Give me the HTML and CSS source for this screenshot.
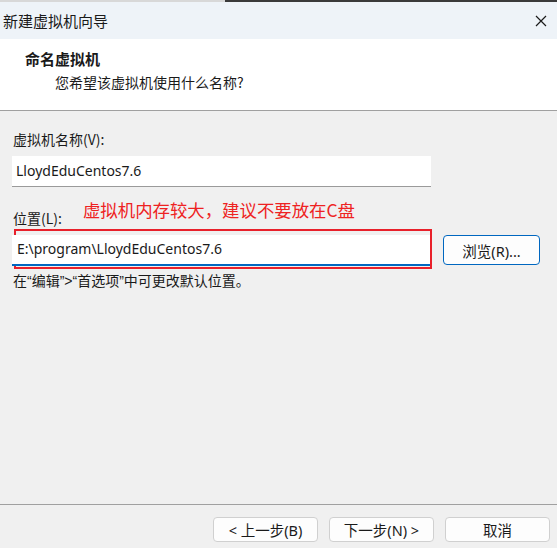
FILE: index.html
```html
<!DOCTYPE html>
<html lang="zh-CN">

<head>
    <meta charset="UTF-8">
    <title>新建虚拟机向导</title>
    <link rel="stylesheet" href="styles.css">
</head>

<body>
    <div class="window">
        <div class="topline">
            <div class="topline-left"></div>
            <div class="topline-right"></div>
        </div>
        <div class="titlebar">
            <span class="title">新建虚拟机向导</span>
            <span class="close">
                <svg width="12" height="12" viewBox="0 0 12 12">
                    <path d="M1 1 L11 11 M11 1 L1 11" stroke="#1a1a1a" stroke-width="1.2" fill="none" />
                </svg>
            </span>
        </div>
        <div class="header">
            <div class="header-title">命名虚拟机</div>
            <div class="header-sub">您希望该虚拟机使用什么名称?</div>
        </div>
        <div class="content">
            <label class="label">虚拟机名称(V):</label>
            <div class="textbox name-box">LloydEduCentos7.6</div>
            <div class="loc-row">
                <label class="label">位置(L):</label>
                <span class="note">虚拟机内存较大，建议不要放在C盘</span>
            </div>
            <div class="path-row">
                <div class="mark">
                    <div class="textbox path-box">E:\program\LloydEduCentos7.6</div>
                </div>
                <button class="btn browse">浏览(R)...</button>
            </div>
            <div class="hint">在“编辑”&gt;“首选项”中可更改默认位置。</div>
        </div>
        <div class="footer">
            <button class="btn">&lt; 上一步(B)</button>
            <button class="btn">下一步(N) &gt;</button>
            <button class="btn">取消</button>
        </div>
    </div>
</body>

</html>
```

FILE: styles.css
```css
body {
    margin: 0;
    font-family: "Noto Sans CJK SC", "Liberation Sans", sans-serif;
    color: #1a1a1a;
}

.window {
    width: 557px;
    height: 548px;
    background-color: #f0f0f0;
    display: flex;
    flex-direction: column;
    overflow: hidden;
}

.topline {
    display: flex;
    height: 2px;
}

.topline-left {
    width: 225px;
    background-color: #d8d8d8;
}

.topline-right {
    flex: 1;
    background-color: #3a3a3a;
}

.titlebar {
    height: 37px;
    background-color: #eef3f8;
    display: flex;
    align-items: center;
    justify-content: space-between;
    padding: 0 10px 0 3px;
}

.title {
    font-size: 15px;
}

.close {
    display: flex;
}

.header {
    height: 72px;
    background-color: #fff;
    border-bottom: 1px solid #a0a0a0;
    box-sizing: border-box;
    padding: 9px 0 0 25px;
}

.header-title {
    font-size: 15px;
    font-weight: bold;
    line-height: 21px;
}

.header-sub {
    font-size: 14px;
    line-height: 22px;
    padding-left: 30px;
    margin-top: 2px;
}

.content {
    flex: 1;
    padding: 18px 0 0 12px;
    border-bottom: 1px solid #a0a0a0;
}

.label {
    display: block;
    font-size: 14px;
    line-height: 20px;
    padding-left: 1px;
}

.textbox {
    background-color: #fff;
    font-family: "Noto Sans", "Liberation Sans", sans-serif;
    font-size: 14px;
    padding-left: 4px;
    box-sizing: border-box;
}

.name-box {
    width: 419px;
    height: 31px;
    line-height: 29px;
    margin-top: 7px;
    border-bottom: 1px solid #9a9a9a;
}

.loc-row {
    display: flex;
    align-items: flex-end;
    margin-top: 12px;
    height: 28px;
}

.loc-row .label {
    line-height: 18px;
}

.note {
    color: #ee2222;
    font-size: 17.4px;
    line-height: 26px;
    margin-left: 21px;
    margin-bottom: 4px;
}

.path-row {
    display: flex;
    align-items: flex-start;
    margin-top: 2px;
}

.mark {
    width: 418px;
    height: 40px;
    border: 2px solid #e8202a;
    box-sizing: border-box;
    margin-left: 2px;
    padding-top: 4px;
}

.path-box {
    width: 418px;
    height: 31px;
    line-height: 28px;
    margin-left: -4px;
    border-bottom: 2px solid #0067c0;
    padding-left: 5px;
}

.btn {
    font-family: "Noto Sans", "Noto Sans CJK SC", sans-serif;
    font-size: 14.5px;
    color: #1a1a1a;
    background-color: #fdfdfd;
    border: 1px solid #d0d0d0;
    border-radius: 4px;
    width: 105px;
    height: 25px;
    padding: 0;
}

.browse {
    width: 97px;
    height: 30px;
    margin: 6px 0 0 11px;
    border-color: #0067c0;
}

.hint {
    font-family: "Liberation Sans", "Noto Sans CJK SC", sans-serif;
    font-size: 14px;
    line-height: 20px;
    margin-top: 2px;
    padding-left: 1px;
}

.footer {
    height: 43px;
    display: flex;
    justify-content: flex-end;
    gap: 11px;
    padding: 12px 7px 0 0;
    box-sizing: border-box;
}
```
